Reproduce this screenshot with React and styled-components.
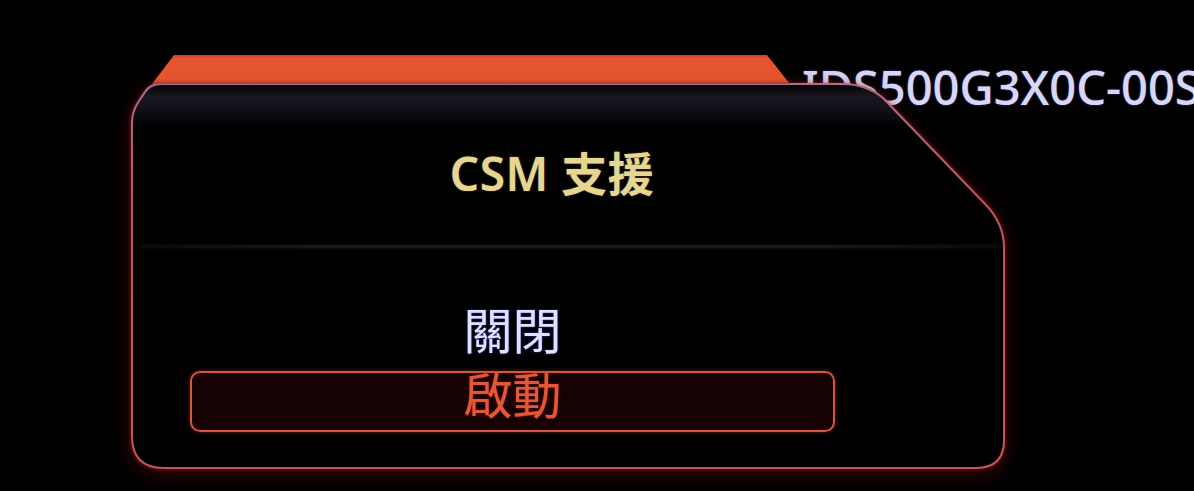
import React from "react";
import styled, { createGlobalStyle } from "styled-components";

const GlobalStyle = createGlobalStyle`
  html, body {
    margin: 0;
    padding: 0;
    background: #000;
  }
  body {
    font-family: "Noto Sans", "Noto Sans CJK TC", sans-serif;
  }
`;

const Stage = styled.div`
  position: relative;
  width: 1194px;
  height: 491px;
  overflow: hidden;
  background: #000;
  box-sizing: border-box;
  padding: 55px 0 0 131px;
`;

const ModelText = styled.div`
  position: absolute;
  left: 802px;
  top: 64px;
  z-index: 0;
  font-family: "Noto Sans", sans-serif;
  font-weight: 500;
  font-size: 47px;
  line-height: 47px;
  white-space: nowrap;
  color: #d8d8f4;
  text-shadow: 0 0 2px rgba(110, 110, 255, 0.7);
`;

const Tab = styled.div`
  position: relative;
  z-index: 2;
  margin-left: 21px;
  margin-bottom: -1px;
  width: 638px;
  height: 29px;
  background: linear-gradient(180deg, #c9402a 0%, #e4552f 12%, #e4552f 82%, #b53a26 100%);
  clip-path: polygon(22px 0, 615px 0, 638px 100%, 0 100%);
`;

const Panel = styled.div`
  position: relative;
  z-index: 1;
  width: 874px;
  height: 386px;
  display: flex;
  flex-direction: column;
`;

const FrameSvg = styled.svg`
  position: absolute;
  left: 0;
  top: 0;
  z-index: 0;
  overflow: visible;
  filter: drop-shadow(0 0 2px rgba(220, 50, 50, 0.5)) drop-shadow(0 5px 10px rgba(120, 10, 10, 0.45));
`;

const Header = styled.div`
  position: relative;
  z-index: 1;
  height: 162px;
  box-sizing: border-box;
  padding: 20px 32px 0 0;
  display: flex;
  align-items: center;
  justify-content: center;
`;

const Title = styled.h1`
  margin: 0;
  font-family: "Noto Sans", "Noto Sans CJK TC", sans-serif;
  font-weight: 600;
  font-size: 46px;
  line-height: 1.2;
  color: #e6d692;
  letter-spacing: 0.5px;
  text-shadow: 0 0 2px rgba(200, 170, 80, 0.5);
`;

const Divider = styled.div`
  position: relative;
  z-index: 1;
  height: 3px;
  margin: 0 6px 0 8px;
  background: linear-gradient(90deg, rgba(34, 34, 34, 0.4), rgba(40, 40, 40, 0.8) 20%, rgba(40, 40, 40, 0.8) 80%, rgba(34, 34, 34, 0.4));
  filter: blur(0.8px);
`;

const Body = styled.div`
  position: relative;
  z-index: 1;
  padding: 58px 0 0 59px;
`;

const List = styled.ul`
  list-style: none;
  margin: 0;
  padding: 0;
  width: 645px;
  display: flex;
  flex-direction: column;
  gap: 4px;
`;

const Option = styled.li`
  height: 61px;
  box-sizing: border-box;
  padding-bottom: 18px;
  display: flex;
  align-items: center;
  justify-content: center;
  border-radius: 10px;
  border: 2.5px solid ${(p) => (p.$active ? "#d5553e" : "transparent")};
  background: ${(p) => (p.$active ? "rgba(40, 4, 4, 0.55)" : "transparent")};
  box-shadow: ${(p) => (p.$active ? "0 0 4px rgba(255, 80, 60, 0.4)" : "none")};
  font-family: "Noto Sans CJK TC", "Noto Sans CJK SC", sans-serif;
  font-weight: 400;
  font-size: 49px;
  line-height: 1;
  color: ${(p) => (p.$active ? "#e25735" : "#e0e0ff")};
  text-shadow: ${(p) =>
    p.$active ? "0 0 2px rgba(180, 30, 10, 0.8)" : "0 0 2px rgba(80, 80, 255, 0.9)"};
`;

const Frame = () => (
  <FrameSvg width="874" height="386" viewBox="0 0 874 386">
    <defs>
      <linearGradient id="frameStroke" x1="0" y1="0" x2="0" y2="386" gradientUnits="userSpaceOnUse">
        <stop offset="0" stopColor="#a8708c" />
        <stop offset="0.3" stopColor="#c0525e" />
        <stop offset="1" stopColor="#c4545a" />
      </linearGradient>
      <linearGradient id="frameFill" x1="0" y1="0" x2="0" y2="386" gradientUnits="userSpaceOnUse">
        <stop offset="0" stopColor="#08070a" />
        <stop offset="0.015" stopColor="#0a080c" />
        <stop offset="0.035" stopColor="#1c1822" />
        <stop offset="0.07" stopColor="#121016" />
        <stop offset="0.115" stopColor="#000" />
        <stop offset="1" stopColor="#000" />
      </linearGradient>
    </defs>
    <path
      d="M 1 40 Q 1 28 8 18 L 14 9 Q 19 1 30 1 L 712 1 Q 735 1 752 15 L 855 122 Q 873 141 873 165 L 873 357 Q 873 385 845 385 L 33 385 Q 1 385 1 353 Z"
      fill="url(#frameFill)"
      stroke="url(#frameStroke)"
      strokeWidth="2"
    />
  </FrameSvg>
);

const options = [
  { id: "off", label: "關閉", active: false },
  { id: "on", label: "啟動", active: true },
];

export default function App() {
  return (
    <>
      <GlobalStyle />
      <Stage>
        <ModelText>IDS500G3X0C-00S</ModelText>
        <Tab />
        <Panel>
          <Frame />
          <Header>
            <Title>CSM 支援</Title>
          </Header>
          <Divider />
          <Body>
            <List>
              {options.map((o) => (
                <Option key={o.id} $active={o.active}>
                  {o.label}
                </Option>
              ))}
            </List>
          </Body>
        </Panel>
      </Stage>
    </>
  );
}
